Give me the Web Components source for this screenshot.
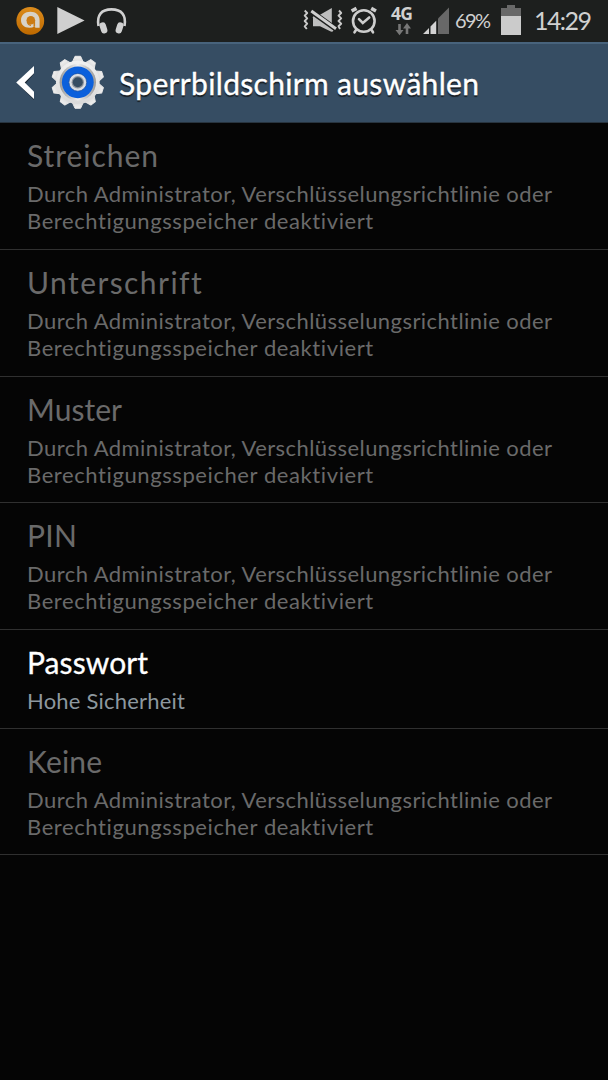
<!DOCTYPE html>
<html lang="de"><head><meta charset="utf-8"><title>Sperrbildschirm auswählen</title>
<style>html,body{margin:0;background:#050505}body{font-family:Lato,"Noto Sans",sans-serif}</style></head>
<body><lock-screen></lock-screen>
<script>
const define=(name,html,after)=>customElements.define(name,class extends HTMLElement{
  connectedCallback(){
    if(this.shadowRoot)return;
    this.attachShadow({mode:'open'}).innerHTML=html;
    if(after)after(this);
  }
});

/* One line of text, tracked so that it takes the given width. */
define('fit-text','<style>:host{display:block;white-space:nowrap}span{display:inline-block}</style><span><slot></slot></span>',el=>{
  const span=el.shadowRoot.querySelector('span');
  const extra=Number(el.getAttribute('w'))-span.getBoundingClientRect().width;
  span.style.letterSpacing=(extra/(el.textContent.length-1)).toFixed(3)+'px';
  el.style.width=el.getAttribute('w')+'px';
});

define('status-bar',`<style>
:host{display:flex;height:42px;background:#1d1f1e;color:#d0d0d0;align-items:flex-start;box-sizing:border-box;padding-left:16px}
svg{display:block;flex:none}
.net{width:24px;margin-left:13px;height:42px;flex:none}
.net fit-text{font:bold 17.5px/18px "Open Sans",sans-serif;padding-top:4px}
.net svg{margin:1px 0 0 4px}
.pct{font-size:20px;line-height:24px;margin:8px 0 0 6px;flex:none}
.clock{font-size:25px;line-height:30px;margin:5px 0 0 13px;flex:none}
</style>
<svg width="112" height="42" viewBox="16 0 112 42">
 <defs><linearGradient id="o" x2="0" y2="1"><stop stop-color="#dc8c1c"/><stop offset="1" stop-color="#bd6900"/></linearGradient></defs>
 <circle cx="30.3" cy="20.8" r="13.9" fill="url(#o)"/>
 <path d="M29.5 27.8C24 27.8 21 24.5 21 20.3C21 15 25 11.8 30.4 11.8S39.6 15 39.6 20.3V27.8H35.5L34.4 26.3Q32.5 27.8 29.5 27.8Z" fill="#d8d2c8"/>
 <circle cx="30.8" cy="20.3" r="4.3" fill="#cb7b14"/><path d="M34.3 20V26.6" stroke="#cb7b14" stroke-width="1.6"/>
 <path d="M27.3 22A4 4 0 0 0 31 25.3" fill="none" stroke="#cb7b14" stroke-width="1.2"/>
 <path d="M57.3 7V34L84.6 20.5Z" fill="#cfcfcf"/>
 <path d="M98.5 26C96.5 15 101.5 9.4 111.5 9.4S126.5 15 124.5 26" fill="none" stroke="#d0d0d0" stroke-width="2.6"/>
 <path d="M102.7 25.6L104.2 30.2M120.3 25.6L118.8 30.2" stroke="#d0d0d0" stroke-width="6.4" stroke-linecap="round"/>
</svg>
<svg style="margin-left:174px" width="76" height="42" viewBox="302 0 76 42">
 <g fill="none" stroke="#c9c9c9" stroke-width="1.9" stroke-linejoin="round">
 <path d="M304.7 10.5L307.2 13L304.7 15.7L307.2 18.4L304.7 21L307.2 23.7L304.7 26.3L306.8 29M339 10.5L341.2 13L338.5 15.7L341.2 18.4L338.5 21L341.2 23.7L338.5 26.3L340 29"/></g>
 <path d="M313 14.8H320L331.8 8V32L320 26.3H313Z" fill="#bebebe"/>
 <path d="M311.8 12.2L336 29.7" stroke="#1d1f1e" stroke-width="6"/>
 <path d="M311.3 11L336 28.7" stroke="#d0d0d0" stroke-width="3"/>
 <path d="M313 16.8L333 31.2" stroke="#bebebe" stroke-width="1.5"/>
 <g fill="none" stroke="#cdcdcd" stroke-linecap="round" stroke-width="2.6">
 <circle cx="363.8" cy="21" r="10.8"/><path d="M359 19.2L362.8 23L369.2 17.5"/>
 <path d="M351.6 11L356.5 8.4M376 11L371.2 8.4" stroke-width="3.6" stroke-linecap="butt"/><path d="M356 30L354.5 32.3M371.6 30L373 32.3"/></g>
</svg>
<div class="net"><fit-text w="22">4G</fit-text><svg width="18" height="14" viewBox="0 0 18 14"><path d="M4.5 1V8M12 4V11" stroke="#777" stroke-width="2.6"/><path d="M.5 7H8.5L4.5 12.3ZM8 5.5H16L12 0Z" fill="#777"/></svg></div>
<svg width="34" height="42" viewBox="415 0 34 42"><path d="M438 18.5L449.5 7V34H438Z" fill="#686868"/><path d="M423 34L429 28V34ZM430.5 26.5L436.2 20.7V34H430.5Z" fill="#d2d2d2"/></svg>
<fit-text class="pct" w="36">69%</fit-text>
<svg style="margin-left:10px" width="20" height="42" viewBox="501 0 20 42"><path d="M501 8H507V5H515V8H521V16H501Z" fill="#686868"/><path d="M501 16H521V35H501Z" fill="#cbcbcb"/></svg>
<fit-text class="clock" w="58">14:29</fit-text>`);

define('title-bar',`<style>
:host{display:flex;align-items:center;height:81px;box-sizing:border-box;background:#364d63;border-top:2px solid #48637c;border-bottom:1px solid #28343f;padding-left:16px;color:#fff}
svg{display:block;flex:none}
::slotted(fit-text){font-size:30px;line-height:36px;-webkit-text-stroke:.35px #fff;text-shadow:0 2px 1px #111c;margin-left:14px}
</style>
<svg width="89" height="78" viewBox="16 44 89 78">
<defs><linearGradient id="g" x2="0" y2="1"><stop stop-color="#f0f0f0"/><stop offset="1" stop-color="#dadada"/></linearGradient>
<linearGradient id="m" x2="1" y2="0"><stop stop-color="#999"/><stop offset=".5" stop-color="#eee"/><stop offset="1" stop-color="#999"/></linearGradient></defs>
<path d="M34 67.2L17.5 83.8L34 100V93.2L25.4 83.8L34 73.8Z" fill="#1b2733"/>
<path d="M34 66L16.2 82.6L34 99V91.8L24.7 82.6L34 73.2Z" fill="#fff"/>
<g transform="translate(77.8 82.3)"><g id="teeth" fill="url(#g)" stroke="#e6e6e6" stroke-linejoin="round"></g>
<circle r="21.8" fill="url(#g)"/><circle r="18.2" fill="url(#m)"/><circle r="15.9" fill="#0b60dc"/>
<circle r="8.9" fill="#d9dde3" stroke="#174e9f" stroke-width=".7"/><circle r="6.2" fill="#8f959d"/><circle r="5" fill="#364d63"/></g>
</svg><slot></slot>`,el=>{
  let teeth='';
  for(let a=0;a<360;a+=36)teeth+=`<path transform="rotate(${a})" d="M-5.5 -20L-2.8 -26H2.8L5.5 -20Z"/>`;
  el.shadowRoot.querySelector('#teeth').innerHTML=teeth;
});

define('lock-option',`<style>
:host{display:flex;flex-direction:column;box-sizing:border-box;border-bottom:1px solid #303030;padding:14px 0 0 27px;color:#6a6a6a}
:host([enabled]){color:#fff}
.title{font-size:30px;line-height:36px;height:42.5px}
.sub{font-size:22px;line-height:27.5px}
:host([enabled]) .title{-webkit-text-stroke:.3px #fff}
:host([enabled]) .sub{color:#8d989f}
</style><div class="title"></div><div class="sub"></div>`,el=>{
  el.style.height=el.getAttribute('h')+'px';
  const put=(sel,lines)=>{for(const [text,w] of lines){const f=document.createElement('fit-text');f.textContent=text;f.setAttribute('w',w);el.shadowRoot.querySelector(sel).append(f)}};
  put('.title',[[el.getAttribute('name'),el.getAttribute('w')]]);
  put('.sub',el.hasAttribute('enabled')?[['Hohe Sicherheit',158]]:[['Durch Administrator, Verschlüsselungsrichtlinie oder',525],['Berechtigungsspeicher deaktiviert',347]]);
});

define('lock-screen',`<style>:host{display:block;width:608px;height:1080px;background:#050505;overflow:hidden}</style>
<status-bar></status-bar><title-bar><fit-text w="360">Sperrbildschirm auswählen</fit-text></title-bar>
<lock-option name="Streichen" w="131" h="127"></lock-option>
<lock-option name="Unterschrift" w="174" h="127"></lock-option>
<lock-option name="Muster" w="95" h="126"></lock-option>
<lock-option name="PIN" w="50" h="127"></lock-option>
<lock-option name="Passwort" w="121" h="99" enabled></lock-option>
<lock-option name="Keine" w="75" h="126"></lock-option>`);
</script></body></html>
